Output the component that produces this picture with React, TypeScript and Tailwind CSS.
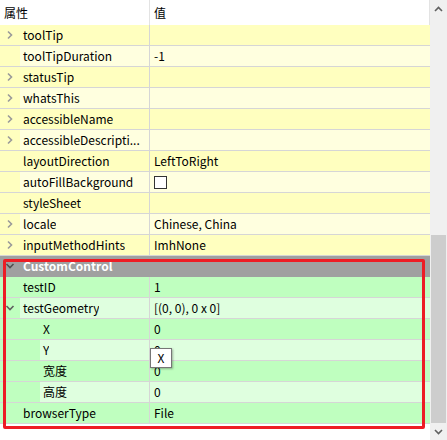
import React from "react";

type Row = {
  name: string;
  value?: string;
  level: number;
  arrow?: "right" | "down";
  kind: "yellow" | "green" | "group";
  check?: boolean;
};

const rows: Row[] = [
  { name: "toolTip", level: 1, arrow: "right", kind: "yellow" },
  { name: "toolTipDuration", value: "-1", level: 1, kind: "yellow" },
  { name: "statusTip", level: 1, arrow: "right", kind: "yellow" },
  { name: "whatsThis", level: 1, arrow: "right", kind: "yellow" },
  { name: "accessibleName", level: 1, arrow: "right", kind: "yellow" },
  { name: "accessibleDescripti...", level: 1, arrow: "right", kind: "yellow" },
  { name: "layoutDirection", value: "LeftToRight", level: 1, kind: "yellow" },
  { name: "autoFillBackground", level: 1, kind: "yellow", check: true },
  { name: "styleSheet", level: 1, kind: "yellow" },
  { name: "locale", value: "Chinese, China", level: 1, arrow: "right", kind: "yellow" },
  { name: "inputMethodHints", value: "ImhNone", level: 1, arrow: "right", kind: "yellow" },
  { name: "CustomControl", level: 1, arrow: "down", kind: "group" },
  { name: "testID", value: "1", level: 1, kind: "green" },
  { name: "testGeometry", value: "[(0, 0), 0 x 0]", level: 1, arrow: "down", kind: "green" },
  { name: "X", value: "0", level: 2, kind: "green" },
  { name: "Y", value: "0", level: 2, kind: "green" },
  { name: "宽度", value: "0", level: 2, kind: "green" },
  { name: "高度", value: "0", level: 2, kind: "green" },
  { name: "browserType", value: "File", level: 1, kind: "green" },
];

const ChevronRight = () => (
  <svg width="8" height="10" viewBox="0 0 8 10" className="block">
    <polyline points="2,1.5 5.5,5 2,8.5" fill="none" stroke="#9a9a9a" strokeWidth="1.6" />
  </svg>
);

const ChevronDown = ({ color }: { color: string }) => (
  <svg width="10" height="8" viewBox="0 0 10 8" className="block">
    <polyline points="1.5,2 5,5.5 8.5,2" fill="none" stroke={color} strokeWidth="1.6" />
  </svg>
);

export default function App() {
  const font = { fontFamily: '"Noto Sans CJK SC", "Noto Sans", sans-serif' };
  return (
    <div className="relative w-[447px] h-[440px] bg-white flex text-[12px] text-black" style={font}>
      <div className="w-[430px] flex flex-col">
        <div className="h-[25px] flex bg-white">
          <div className="w-[150px] border-r border-[#e3e3e3] pl-[4px] flex items-center">属性</div>
          <div className="flex-1 pl-[4px] flex items-center border-r border-[#e3e3e3]">值</div>
        </div>
        {rows.map((r, i) => {
          const dark = i % 2 === 0;
          if (r.kind === "group") {
            return (
              <div key={i} className="h-[21px] flex bg-[#a0a0a0] border-b border-[#a0a0a0]">
                <div className="w-[20px] flex items-center justify-center">
                  <ChevronDown color="#505050" />
                </div>
                <div className="pl-[3px] flex items-center font-bold text-white">{r.name}</div>
              </div>
            );
          }
          const darkBg = r.kind === "yellow" ? "bg-[#ffffbf]" : "bg-[#bfffbf]";
          const lightBg = r.kind === "yellow" ? "bg-[#ffffdf]" : "bg-[#dfffdf]";
          const rowBg = dark ? darkBg : lightBg;
          return (
            <div key={i} className={`h-[21px] flex border-b border-[#d6d6d6] ${rowBg}`}>
              <div className="w-[150px] flex border-r border-[#d6d6d6]">
                <div
                  className={`${r.level === 2 ? "w-[40px]" : "w-[20px]"} ${darkBg} flex items-center justify-center shrink-0`}
                >
                  {r.arrow === "right" && <ChevronRight />}
                  {r.arrow === "down" && <ChevronDown color="#606060" />}
                </div>
                <div className="pl-[3px] flex items-center whitespace-nowrap overflow-hidden">{r.name}</div>
              </div>
              <div className="flex-1 pl-[4px] flex items-center whitespace-nowrap">
                {r.check ? (
                  <div className="w-[13px] h-[13px] border border-[#333333] bg-white" />
                ) : (
                  r.value
                )}
              </div>
            </div>
          );
        })}
      </div>
      <div className="w-[17px] bg-[#f0f0f0] flex flex-col">
        <div className="h-[17px] flex items-center justify-center">
          <svg width="9" height="6" viewBox="0 0 9 6">
            <polyline points="1,5 4.5,1.5 8,5" fill="none" stroke="#606060" strokeWidth="1.6" />
          </svg>
        </div>
        <div className="flex-1 flex flex-col justify-end px-[1px]">
          <div className="h-[188px] bg-[#cdcdcd]" />
        </div>
        <div className="h-[17px] flex items-center justify-center">
          <svg width="9" height="6" viewBox="0 0 9 6">
            <polyline points="1,1 4.5,4.5 8,1" fill="none" stroke="#606060" strokeWidth="1.6" />
          </svg>
        </div>
      </div>
      <div className="absolute left-[3px] top-[259px] w-[422px] h-[170px] border-[3px] border-[#ed1c24] rounded-[2px] pointer-events-none" />
      <div className="absolute left-[150px] top-[348px] w-[22px] h-[20px] bg-white border border-[#767676] shadow-[1px_1px_2px_rgba(0,0,0,0.3)] flex items-center justify-center">
        X
      </div>
    </div>
  );
}
